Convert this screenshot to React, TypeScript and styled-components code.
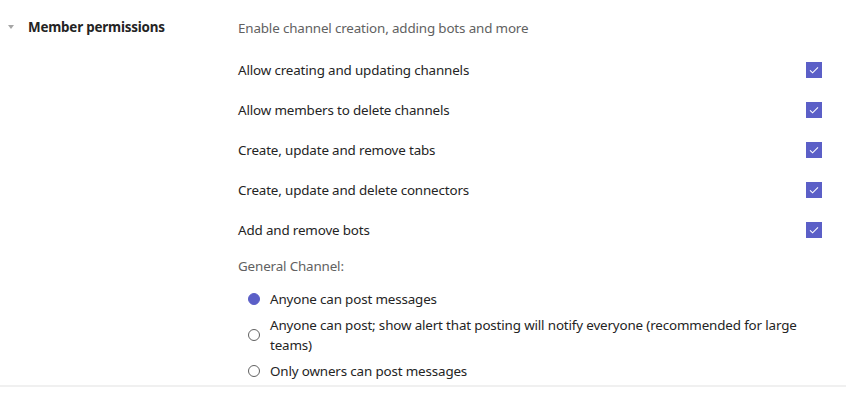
import React, { useState } from 'react';
import styled, { createGlobalStyle } from 'styled-components';

const GlobalStyle = createGlobalStyle`
  html, body {
    margin: 0;
    padding: 0;
    background: #ffffff;
  }
  body {
    font-family: 'Noto Sans', 'Open Sans', sans-serif;
    font-size: 13.4px;
    letter-spacing: -0.15px;
    color: #242424;
  }
`;

const Section = styled.section`
  display: grid;
  grid-template-columns: 238px 1fr;
  padding: 17px 24px 4px 0;
  border-bottom: 2px solid #f0f0f0;
`;

const Header = styled.div`
  display: flex;
  align-items: center;
  height: 20px;
  padding-left: 8px;
  gap: 14px;
`;

const Caret = styled.span`
  width: 0;
  height: 0;
  border-left: 3.5px solid transparent;
  border-right: 3.5px solid transparent;
  border-top: 4px solid #a6a6a6;
`;

const Title = styled.h3`
  margin: 0;
  font-size: 13.4px;
  font-weight: 700;
  line-height: 20px;
  letter-spacing: -0.2px;
  color: #242424;
`;

const Content = styled.div`
  display: flex;
  flex-direction: column;
  padding-top: 1px;
`;

const Description = styled.div`
  line-height: 20px;
  color: #616161;
  margin-bottom: 12px;
`;

const CheckRow = styled.label`
  display: flex;
  align-items: center;
  justify-content: space-between;
  height: 40px;
  line-height: 20px;
  cursor: pointer;
`;

const CheckBox = styled.span<{ $checked: boolean }>`
  width: 16px;
  height: 16px;
  display: flex;
  align-items: center;
  justify-content: center;
  background: ${(p) => (p.$checked ? '#5b5fc7' : '#ffffff')};
  border: ${(p) => (p.$checked ? 'none' : '1px solid #616161')};
  box-sizing: border-box;
`;

const GroupLabel = styled.div`
  margin-top: 6px;
  line-height: 20px;
  color: #616161;
`;

const RadioList = styled.div`
  display: flex;
  flex-direction: column;
  gap: 6px;
  margin-top: 13px;
  padding-left: 10px;
`;

const RadioRow = styled.label`
  display: flex;
  align-items: center;
  gap: 10px;
  line-height: 20px;
  cursor: pointer;
`;

const RadioDot = styled.span<{ $checked: boolean }>`
  flex: none;
  width: 12px;
  height: 12px;
  border-radius: 50%;
  box-sizing: border-box;
  background: ${(p) => (p.$checked ? '#5b5fc7' : '#ffffff')};
  border: 1px solid ${(p) => (p.$checked ? '#5b5fc7' : '#616161')};
`;

const permissions = [
  'Allow creating and updating channels',
  'Allow members to delete channels',
  'Create, update and remove tabs',
  'Create, update and delete connectors',
  'Add and remove bots',
];

const postingOptions = [
  'Anyone can post messages',
  'Anyone can post; show alert that posting will notify everyone (recommended for large teams)',
  'Only owners can post messages',
];

const CheckMark = () => (
  <svg width="16" height="16" viewBox="0 0 16 16">
    <path d="M4 8.4 L6.6 10.8 L12 5.4" fill="none" stroke="#ffffff" strokeWidth="1.1" />
  </svg>
);

const App: React.FC = () => {
  const [checked, setChecked] = useState<boolean[]>(permissions.map(() => true));
  const [posting, setPosting] = useState<number>(0);

  const toggle = (i: number) => {
    setChecked((prev) => prev.map((v, idx) => (idx === i ? !v : v)));
  };

  return (
    <>
      <GlobalStyle />
      <Section>
        <Header>
          <Caret />
          <Title>Member permissions</Title>
        </Header>
        <Content>
          <Description>Enable channel creation, adding bots and more</Description>
          {permissions.map((p, i) => (
            <CheckRow key={p} onClick={() => toggle(i)}>
              <span>{p}</span>
              <CheckBox $checked={checked[i]}>{checked[i] && <CheckMark />}</CheckBox>
            </CheckRow>
          ))}
          <GroupLabel>General Channel:</GroupLabel>
          <RadioList>
            {postingOptions.map((o, i) => (
              <RadioRow key={o} onClick={() => setPosting(i)}>
                <RadioDot $checked={posting === i} />
                <span>{o}</span>
              </RadioRow>
            ))}
          </RadioList>
        </Content>
      </Section>
    </>
  );
};

export default App;
